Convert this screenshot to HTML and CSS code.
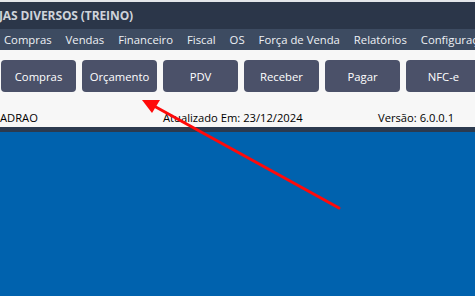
FILE: index.html
```html
<!DOCTYPE html>
<html>
<head>
<meta charset="utf-8">
<link rel="stylesheet" href="styles.css">
</head>
<body>
<div class="window">
  <div class="titlebar"><span class="title">JAS DIVERSOS (TREINO)</span></div>
  <nav class="menubar">
    <span>Compras</span><span>Vendas</span><span>Financeiro</span><span>Fiscal</span><span>OS</span><span>Força de Venda</span><span>Relatórios</span><span>Configurações</span>
  </nav>
  <div class="panel">
    <div class="toolbar">
      <button class="btn">Compras</button>
      <button class="btn">Orçamento</button>
      <button class="btn">PDV</button>
      <button class="btn">Receber</button>
      <button class="btn">Pagar</button>
      <button class="btn">NFC-e</button>
    </div>
    <div class="status">
      <span>ADRAO</span>
      <span>Atualizado Em: 23/12/2024</span>
      <span>Versão: 6.0.0.1</span>
    </div>
  </div>
  <div class="strip"></div>
  <div class="desktop"></div>
  <svg class="arrow" width="475" height="296" viewBox="0 0 475 296">
    <line x1="339" y1="208" x2="154" y2="106" stroke="#ff0a0a" stroke-width="3" stroke-linecap="round"/>
    <polygon points="142,100 160,100 152,113" fill="#ff0a0a"/>
  </svg>
</div>
</body>
</html>
```
FILE: styles.css
```css
* { box-sizing: border-box; }
html, body { margin: 0; padding: 0; }
body {
  width: 475px;
  height: 296px;
  overflow: hidden;
  font-family: "Open Sans", "Noto Sans", sans-serif;
  font-size: 11px;
}
.window {
  position: relative;
  display: flex;
  flex-direction: column;
  height: 296px;
  border-top: 2px solid #e4e6ea;
}
.titlebar {
  height: 27px;
  background: #2b3649;
  color: #cfd3da;
  display: flex;
  align-items: center;
  white-space: nowrap;
  overflow: hidden;
}
.title {
  font-weight: 700;
  font-size: 12px;
  margin-left: -1px;
  letter-spacing: -0.1px;
}
.menubar {
  height: 21px;
  background: #3d4b61;
  color: #eef1f5;
  display: flex;
  align-items: center;
  gap: 14px;
  padding-left: 4px;
  font-size: 11.3px;
  white-space: nowrap;
  overflow: hidden;
}
.panel {
  background: #f7f7f7;
  height: 77px;
  display: flex;
  flex-direction: column;
}
.toolbar {
  display: flex;
  gap: 6px;
  padding: 10px 0 0 1px;
  overflow: hidden;
}
.btn {
  flex: 0 0 75px;
  height: 32px;
  border: none;
  border-radius: 4px;
  background: #4b5169;
  color: #ffffff;
  font-family: inherit;
  font-size: 11.3px;
  padding: 0;
}
.status {
  display: grid;
  grid-template-columns: 163px 215px auto;
  margin-top: 18px;
  color: #000;
  white-space: nowrap;
  font-size: 11.2px;
  line-height: 16px;
}
.strip {
  height: 5px;
  background: #2c3a4f;
}
.desktop {
  flex: 1;
  background: #0062ae;
}
.arrow {
  position: absolute;
  left: 0;
  top: -2px;
  pointer-events: none;
}
```
